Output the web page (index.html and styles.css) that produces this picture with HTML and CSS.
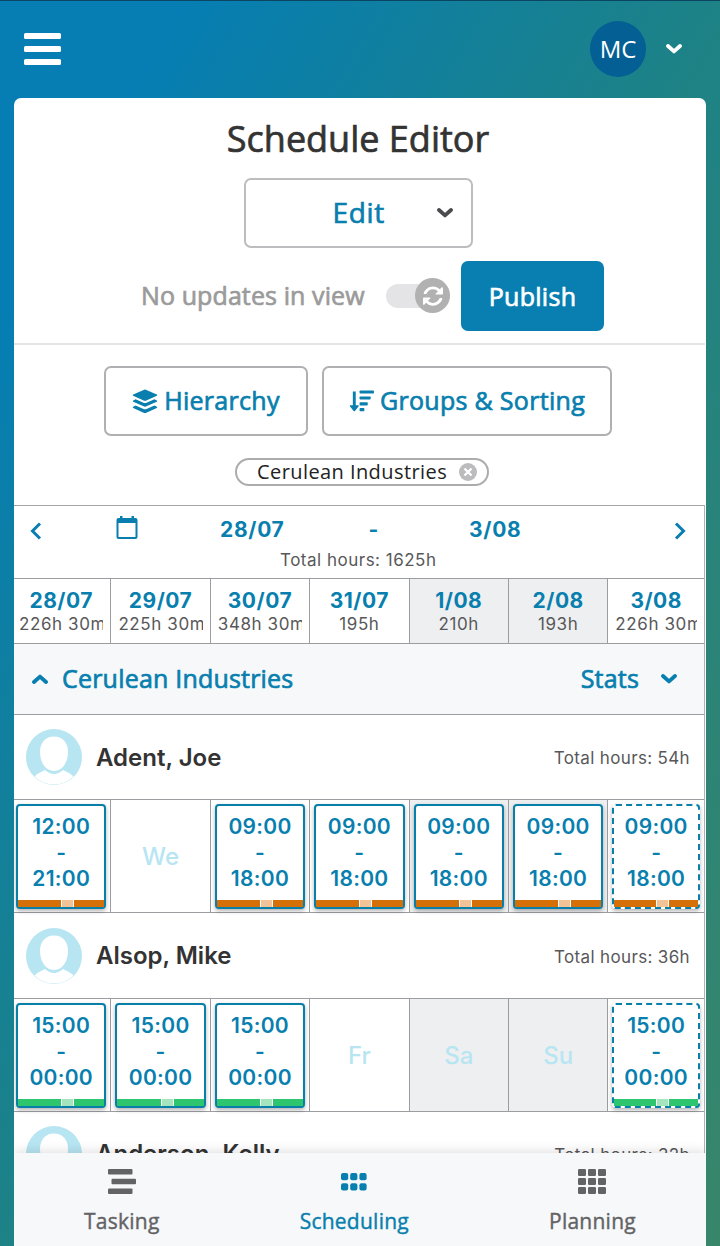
FILE: index.html
```html
<!DOCTYPE html>
<html lang="en">
<head>
    <meta charset="UTF-8">
    <meta name="viewport" content="width=device-width, initial-scale=1.0">
    <title>Schedule Editor</title>
    <link rel="stylesheet" href="styles.css">
</head>
<body>
    <header class="topbar">
        <div class="menu"><span></span><span></span><span></span></div>
        <div class="user">
            <div class="initials">MC</div>
            <svg class="chevron" viewBox="0 0 16 10"><path d="M2 2l6 5.4L14 2"/></svg>
        </div>
    </header>

    <main class="panel">
        <h1>Schedule Editor</h1>
        <div class="mode">
            <span>Edit</span>
            <svg class="chevron" viewBox="0 0 16 10"><path d="M2 2l6 5.4L14 2"/></svg>
        </div>
        <div class="updates">
            <span class="updates-text">No updates in view</span>
            <div class="toggle">
                <div class="knob">
                    <svg viewBox="0 0 512 512"><path fill="#fff" d="M105 203c22-62 82-107 151-107 45 0 86 18 115 49l-50 50c-10 10-3 27 11 27h140c9 0 16-7 16-16V66c0-14-17-21-27-11l-45 45C375 58 318 32 256 32 155 32 69 98 40 188c-4 12 5 24 18 24h33c6 0 12-3 14-9zM407 309c-22 62-82 107-151 107-45 0-86-18-115-49l50-50c10-10 3-27-11-27H40c-9 0-16 7-16 16v140c0 14 17 21 27 11l45-45c41 42 98 68 160 68 101 0 187-66 216-156 4-12-5-24-18-24h-33c-6 0-12 3-14 9z"/></svg>
                </div>
            </div>
            <button class="publish">Publish</button>
        </div>

        <div class="filters">
            <button class="outline hierarchy">
                <svg width="26" height="25" viewBox="0 0 26 25"><g fill="#087fae"><path d="M12.2.7q.8-.3 1.6 0l11 4.9q1 .6 0 1.2l-11 4.9q-.8.3-1.6 0l-11-4.9q-1-.6 0-1.2z"/><path d="M3.6 10.3l7.8 3.4q1.6.6 3.2 0l7.8-3.4 2.4 1.2q1 .6 0 1.2l-11 4.9q-.8.3-1.6 0l-11-4.9q-1-.6 0-1.2z"/><path d="M3.6 16.6l7.8 3.4q1.6.6 3.2 0l7.8-3.4 2.4 1.2q1 .6 0 1.2l-11 4.9q-.8.3-1.6 0l-11-4.9q-1-.6 0-1.2z"/></g></svg>
                <span>Hierarchy</span>
            </button>
            <button class="outline sorting">
                <svg width="25" height="22" viewBox="0 0 26 22"><g fill="#087fae"><path d="M4 1h3v14.5h2.6q1 .2.3 1.1l-3.7 4.7q-.7.6-1.4 0L1.1 16.6q-.7-.9.3-1.1H4z"/><rect x="11" y="0" width="15" height="3.2" rx=".8"/><rect x="11" y="6.2" width="11.5" height="3.2" rx=".8"/><rect x="11" y="12.4" width="8.5" height="3.2" rx=".8"/><rect x="11" y="18.4" width="5" height="3.2" rx=".8"/></g></svg>
                <span>Groups &amp; Sorting</span>
            </button>
        </div>
        <div class="chip">
            <span>Cerulean Industries</span>
            <svg width="18" height="18" viewBox="0 0 18 18"><circle cx="9" cy="9" r="9" fill="#bcbcbe"/><path d="M5.5 5.5l7 7M12.5 5.500l-7 7" stroke="#fff" stroke-width="2.2"/></svg>
        </div>

        <section class="schedule">
            <div class="range">
                <svg class="prev" width="12" height="18" viewBox="0 0 12 18"><path d="M10 1.5L2.5 9l7.5 7.5"/></svg>
                <svg class="calendar" width="22" height="23" viewBox="0 0 22 23"><path fill="#087fae" fill-rule="evenodd" d="M4 0h2.5v2h9V0H18v2h1.5Q21.500 2 21.500 4v17q0 2-2 2h-17q-2 0-2-2V4q0-2 2-2H4zM2.500 7v14h17V7z"/></svg>
                <div class="range-text">
                    <div class="range-dates"><b>28/07</b><b>-</b><b>3/08</b></div>
                    <div class="range-total">Total hours: 1625h</div>
                </div>
                <svg class="next" width="12" height="18" viewBox="0 0 12 18"><path d="M2 1.5L9.500 9 2 16.5"/></svg>
            </div>

            <div class="week days">
                <div class="cell"><b>28/07</b><span>226h 30m</span></div>
                <div class="cell"><b>29/07</b><span>225h 30m</span></div>
                <div class="cell"><b>30/07</b><span>348h 30m</span></div>
                <div class="cell"><b>31/07</b><span>195h</span></div>
                <div class="cell weekend"><b>1/08</b><span>210h</span></div>
                <div class="cell weekend"><b>2/08</b><span>193h</span></div>
                <div class="cell"><b>3/08</b><span>226h 30m</span></div>
            </div>

            <div class="group">
                <svg class="chevron" viewBox="0 0 16 10"><path d="M2 8l6-5.4L14 8"/></svg>
                <span>Cerulean Industries</span>
                <span class="stats">Stats</span>
                <svg class="chevron" viewBox="0 0 16 10"><path d="M2 2l6 5.4L14 2"/></svg>
            </div>

            <div class="person">
                <svg class="avatar" viewBox="0 0 56 56"><circle cx="28" cy="28" r="28" fill="#b7e5f2"/><path d="M8.5 47.5C11 44.5 15 43 19 41q9 8 18 0c4 2 8 3.500 10.5 6.5A27.6 27.6 0 0 1 8.5 47.5z" fill="#fff"/><path d="M28 7.5c8.5 0 14 6 14 15.5 0 10-5.500 19-14 19s-14-9-14-19c0-9.500 5.500-15.500 14-15.500z" fill="#fff"/></svg>
                <span class="name">Adent, Joe</span>
                <span class="total">Total hours: 54h</span>
            </div>
            <div class="week shifts orange">
                <div class="cell"><div class="shift">12:00<br>-<br>21:00<div class="bar"><i></i></div></div></div>
                <div class="cell">We</div>
                <div class="cell"><div class="shift">09:00<br>-<br>18:00<div class="bar"><i></i></div></div></div>
                <div class="cell"><div class="shift">09:00<br>-<br>18:00<div class="bar"><i></i></div></div></div>
                <div class="cell weekend"><div class="shift">09:00<br>-<br>18:00<div class="bar"><i></i></div></div></div>
                <div class="cell weekend"><div class="shift">09:00<br>-<br>18:00<div class="bar"><i></i></div></div></div>
                <div class="cell"><div class="shift draft">09:00<br>-<br>18:00<div class="bar"><i></i></div></div></div>
            </div>

            <div class="person">
                <svg class="avatar" viewBox="0 0 56 56"><circle cx="28" cy="28" r="28" fill="#b7e5f2"/><path d="M8.5 47.5C11 44.5 15 43 19 41q9 8 18 0c4 2 8 3.500 10.5 6.5A27.6 27.6 0 0 1 8.5 47.5z" fill="#fff"/><path d="M28 7.5c8.5 0 14 6 14 15.5 0 10-5.500 19-14 19s-14-9-14-19c0-9.500 5.500-15.500 14-15.500z" fill="#fff"/></svg>
                <span class="name">Alsop, Mike</span>
                <span class="total">Total hours: 36h</span>
            </div>
            <div class="week shifts green">
                <div class="cell"><div class="shift">15:00<br>-<br>00:00<div class="bar"><i></i></div></div></div>
                <div class="cell"><div class="shift">15:00<br>-<br>00:00<div class="bar"><i></i></div></div></div>
                <div class="cell"><div class="shift">15:00<br>-<br>00:00<div class="bar"><i></i></div></div></div>
                <div class="cell">Fr</div>
                <div class="cell weekend">Sa</div>
                <div class="cell weekend">Su</div>
                <div class="cell"><div class="shift draft">15:00<br>-<br>00:00<div class="bar"><i></i></div></div></div>
            </div>

            <div class="person">
                <svg class="avatar" viewBox="0 0 56 56"><circle cx="28" cy="28" r="28" fill="#b7e5f2"/><path d="M28 7.5c8.5 0 14 6 14 15.5 0 10-5.500 19-14 19s-14-9-14-19c0-9.500 5.500-15.500 14-15.500z" fill="#fff"/></svg>
                <span class="name">Anderson, Kelly</span>
                <span class="total">Total hours: 32h</span>
            </div>
        </section>
    </main>

    <nav class="tabs">
        <div class="tab">
            <svg width="28" height="25" viewBox="0 0 28 25"><rect width="24.5" height="5.4" rx="1"/><rect x="3.5" y="9.8" width="24.5" height="5.4" rx="1"/><rect y="19.6" width="24.5" height="5.4" rx="1"/></svg>
            <span>Tasking</span>
        </div>
        <div class="tab active">
            <svg width="26" height="25" viewBox="0 0 26 25"><rect y="4" width="7.2" height="7.2" rx="2"/><rect x="9.2" y="4" width="7.2" height="7.2" rx="2"/><rect x="18.4" y="4" width="7.2" height="7.2" rx="2"/><rect y="14.2" width="7.2" height="7.2" rx="2"/><rect x="9.2" y="14.2" width="7.2" height="7.2" rx="2"/><rect x="18.4" y="14.2" width="7.2" height="7.2" rx="2"/></svg>
            <span>Scheduling</span>
        </div>
        <div class="tab">
            <svg width="28" height="25" viewBox="0 0 28 25"><rect width="8" height="7" rx="1.3"/><rect x="10" width="8" height="7" rx="1.3"/><rect x="20" width="8" height="7" rx="1.3"/><rect y="9" width="8" height="7" rx="1.3"/><rect x="10" y="9" width="8" height="7" rx="1.3"/><rect x="20" y="9" width="8" height="7" rx="1.3"/><rect y="18" width="8" height="7" rx="1.3"/><rect x="10" y="18" width="8" height="7" rx="1.3"/><rect x="20" y="18" width="8" height="7" rx="1.3"/></svg>
            <span>Planning</span>
        </div>
    </nav>
</body>
</html>
```
FILE: styles.css
```css
* {
    box-sizing: border-box;
}
body {
    margin: 0;
    height: 1246px;
    overflow: hidden;
    display: flex;
    flex-direction: column;
    padding: 0 14px;
    border-top: 1px solid #0b4562;
    font-family: "Open Sans", sans-serif;
    color: #333;
    background: linear-gradient(to bottom right, #067eb3 13%, #1e8285 51%, #38866a);
}
svg {
    display: block;
    flex: none;
}
.chevron {
    width: 16px;
    height: 10px;
    fill: none;
    stroke: currentColor;
    stroke-width: 3.8;
    stroke-linecap: round;
    stroke-linejoin: round;
}
.topbar {
    flex: none;
    height: 97px;
    padding: 0 24px 2px 10px;
    display: flex;
    align-items: center;
    justify-content: space-between;
}
.menu {
    width: 37px;
    display: grid;
    gap: 7px;
}
.menu span {
    height: 6px;
    border-radius: 1.5px;
    background: #fff;
}
.user {
    display: flex;
    align-items: center;
    gap: 20px;
    color: #fff;
}
.initials {
    width: 56px;
    height: 56px;
    border-radius: 50%;
    background: #035f94;
    font-size: 24px;
    line-height: 56px;
    text-align: center;
}
.panel {
    flex: 1;
    min-height: 0;
    overflow: hidden;
    background: #fff;
    border-radius: 7px 7px 0 0;
    padding-right: 1px;
}
/* medium weight */
h1, .mode span, .updates-text, button, .group span {
    font-weight: 400;
    -webkit-text-stroke: .7px currentColor;
}
h1 {
    margin: 17px 0 15px;
    height: 48px;
    line-height: 48px;
    font-size: 36px;
    text-align: center;
    padding-right: 3px;
}
.mode {
    width: 229px;
    height: 70px;
    margin-left: 230px;
    border: 2px solid #bdbdbf;
    border-radius: 7px;
    display: flex;
    align-items: center;
    justify-content: flex-end;
    gap: 52px;
    padding-right: 18px;
    font-size: 28px;
    letter-spacing: .7px;
    color: #087fae;
}
.mode span {
    padding-bottom: 2px;
}
.mode .chevron {
    color: #4b4b4d;
}
.updates {
    height: 97px;
    display: flex;
    align-items: center;
    padding-left: 127px;
    border-bottom: 2px solid #e5e5e7;
}
.updates-text {
    width: 245px;
    padding-bottom: 2px;
    font-size: 25px;
    letter-spacing: .1px;
    color: #9b9b9b;
    white-space: nowrap;
}
.toggle {
    width: 64px;
    height: 24px;
    border-radius: 12px;
    background: #e4e4e6;
    display: flex;
    align-items: center;
    justify-content: flex-end;
}
.knob {
    width: 35px;
    height: 35px;
    border-radius: 50%;
    background: #b1b1b1;
    display: grid;
    place-items: center;
}
.knob svg {
    width: 22px;
    height: 22px;
}
button {
    font: 400 25px "Open Sans", sans-serif;
    letter-spacing: .3px;
    padding: 0;
    height: 70px;
    border-radius: 7px;
    white-space: nowrap;
}
.publish {
    width: 143px;
    margin-left: 11px;
    border: 0;
    background: #087eb1;
    color: #fff;
}
.filters {
    display: flex;
    gap: 14px;
    margin: 21px 0 0 90px;
}
.outline {
    display: flex;
    align-items: center;
    justify-content: center;
    gap: 6px;
    border: 2px solid #b0b0b2;
    background: #fff;
    color: #087fae;
}
.outline span {
    padding-bottom: 2px;
}
.hierarchy {
    width: 204px;
}
.sorting {
    width: 290px;
}
.chip {
    width: 254px;
    height: 28px;
    margin: 22px 0 19px 221px;
    border: 2px solid #acacae;
    border-radius: 14px;
    padding-left: 20px;
    display: flex;
    align-items: center;
    gap: 12px;
    font-size: 20px;
    letter-spacing: .42px;
    color: #222;
    white-space: nowrap;
}
.chip span {
    padding-bottom: 2px;
}
.schedule {
    font-family: Inter, sans-serif;
    border-top: 1px solid #a2a3a6;
    border-right: 1px solid #b0b1b4;
}
.range {
    height: 73px;
    border-bottom: 1px solid #9c9da0;
    display: flex;
    color: #087fae;
    padding: 0 18px 0 16px;
}
.prev, .next {
    margin-top: 16px;
    fill: none;
    stroke: #087fae;
    stroke-width: 3;
}
.calendar {
    margin: 10px 0 0 74px;
}
.range-text {
    flex: 1;
    padding: 9px 0 0 82px;
}
.range-dates {
    height: 28px;
    display: flex;
    align-items: center;
    font-size: 21px;
    letter-spacing: .7px;
}
.range-dates b:nth-child(2) {
    margin: 0 90px 0 84px;
}
.range-total {
    margin-left: 60px;
    line-height: 34px;
    font-size: 17px;
    letter-spacing: .5px;
    color: #58585a;
}
b {
    font-weight: 700;
}
.week {
    display: grid;
    grid-template-columns: 97.4px repeat(5, 99.4px) 1fr;
    border-bottom: 1px solid #9c9da0;
}
.cell {
    min-width: 0;
    border-right: 1px solid #9c9da0;
}
.cell:last-child {
    border-right: 0;
}
.weekend {
    background: #eeeff1;
}
.days .cell {
    height: 64px;
    padding: 9px 7px 0 7px;
    text-align: center;
}
.days .cell:first-child {
    padding-left: 5px;
}
.days b {
    display: block;
    font-size: 21px;
    line-height: 26px;
    letter-spacing: .5px;
    color: #087fae;
}
.days span {
    display: block;
    overflow: hidden;
    font-size: 17px;
    line-height: 21px;
    letter-spacing: .6px;
    white-space: nowrap;
    color: #58585a;
}
.group {
    height: 71px;
    border-bottom: 1px solid #9c9da0;
    background: #f6f8fa;
    display: flex;
    align-items: center;
    gap: 14px;
    padding: 0 27px 0 18px;
    font: 400 25px "Open Sans", sans-serif;
    letter-spacing: .2px;
    color: #087fae;
}
.group span {
    padding-bottom: 2px;
}
.group .stats {
    margin: 0 8px 0 auto;
}
.person {
    height: 85.4px;
    border-bottom: 1px solid #9c9da0;
    display: flex;
    align-items: center;
    padding: 0 14px 0 12px;
}
.avatar {
    width: 56px;
    height: 56px;
}
.name {
    margin-left: 14px;
    font-size: 24px;
    font-weight: 600;
}
.total {
    margin-left: auto;
    padding-top: 2px;
    font-size: 17px;
    letter-spacing: .35px;
    color: #58585a;
}
.shifts .cell {
    height: 112px;
    padding: 4px;
    font-size: 24px;
    font-weight: 500;
    line-height: 106px;
    text-align: center;
    color: #b7e5f2;
}
.shifts .cell:first-child {
    padding-left: 2px;
}
.shifts {
    height: 113px;
}
.shifts .shift {
    height: 105px;
    position: relative;
    padding-top: 8px;
    border: 2px solid #087fa9;
    border-radius: 4px;
    background: #fff;
    box-shadow: 0 2px 4px rgba(0, 0, 0, .3);
    font-size: 21px;
    font-weight: 600;
    line-height: 26px;
    letter-spacing: .3px;
    color: #087fae;
}
.shifts .draft {
    border-style: dashed;
}
.bar {
    position: absolute;
    left: 0;
    right: 0;
    bottom: 0;
    height: 7px;
    background: #d56f07;
}
.bar i {
    display: block;
    width: 13px;
    height: 7px;
    margin-left: 50%;
    border: solid #fff;
    border-width: 0 1px;
    background: #f1c397;
}
.green .bar {
    background: #2dc56e;
}
.green .bar i {
    background: #a4e5be;
}
.tabs {
    flex: none;
    position: relative;
    height: 93px;
    display: flex;
    justify-content: space-around;
    background: #f6f8fa;
    box-shadow: 0 -2px 10px rgba(0, 0, 0, .12);
    clip-path: inset(-14px 0 0 0);
}
.tab {
    padding-top: 16px;
    display: flex;
    flex-direction: column;
    align-items: center;
    gap: 13px;
    font-size: 21px;
    letter-spacing: .25px;
    -webkit-text-stroke: .4px currentColor;
    color: #636365;
}
.tab svg {
    fill: currentColor;
}
.active {
    color: #087fae;
}
```
